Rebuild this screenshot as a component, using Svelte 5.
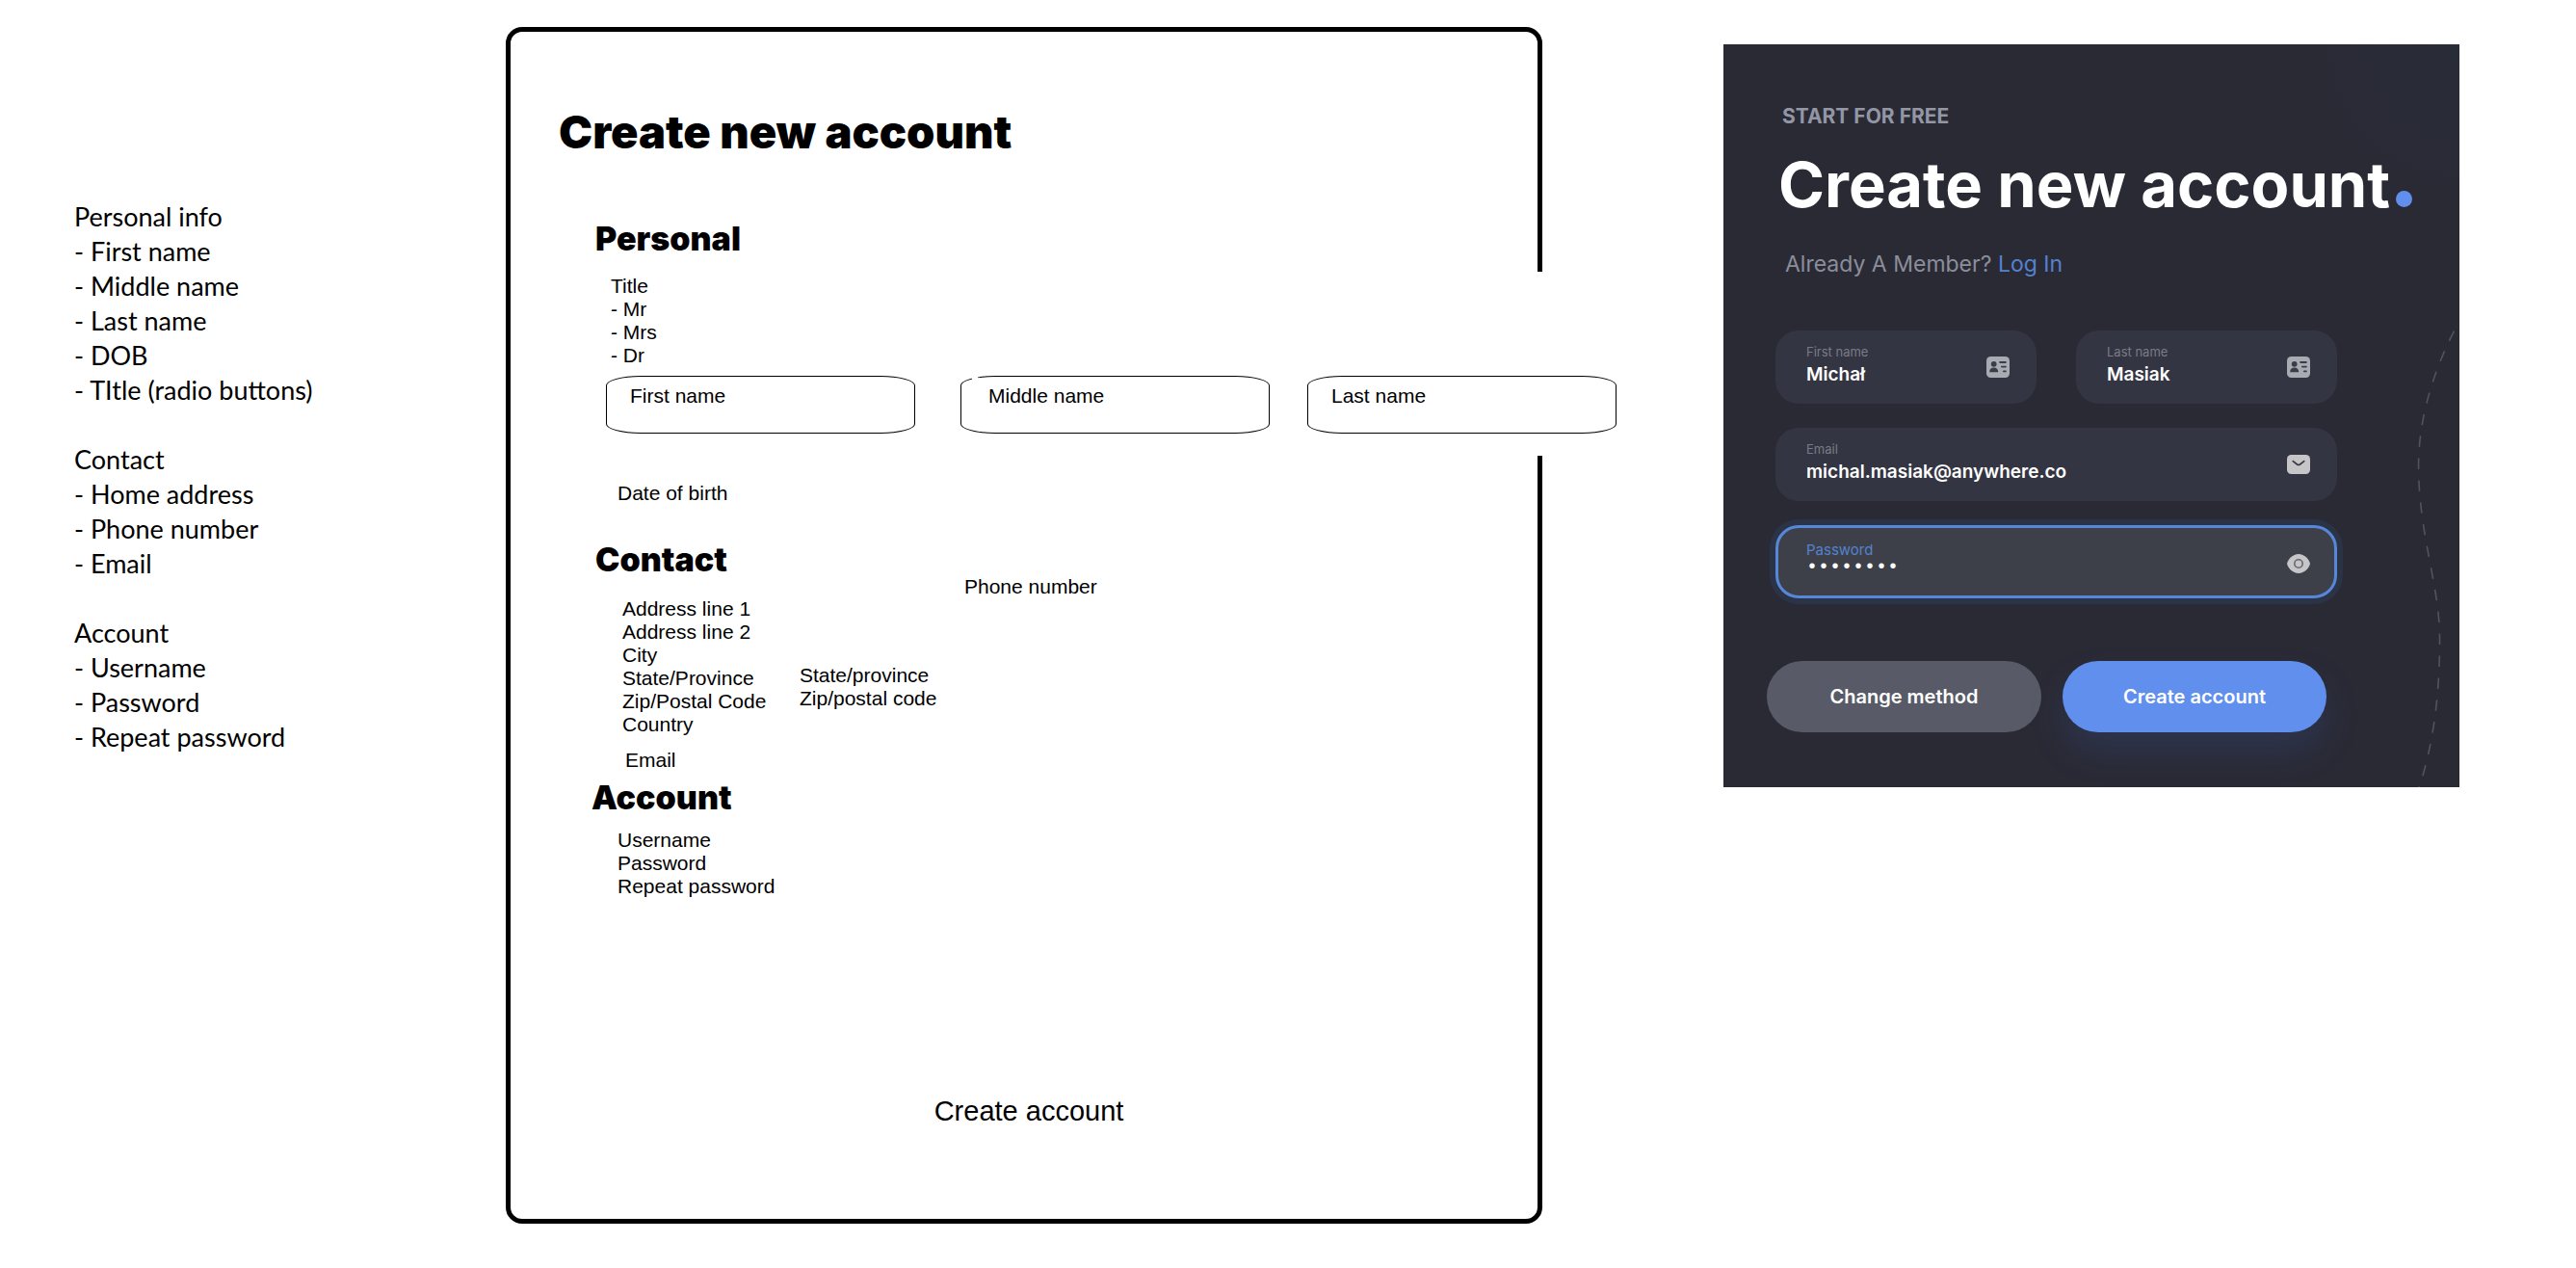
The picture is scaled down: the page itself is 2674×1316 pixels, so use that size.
<script>
  const notes = [
    { title: 'Personal info', items: ['First name', 'Middle name', 'Last name', 'DOB', 'TItle (radio buttons)'] },
    { title: 'Contact', items: ['Home address', 'Phone number', 'Email'] },
    { title: 'Account', items: ['Username', 'Password', 'Repeat password'] }
  ];
  const titles = ['Mr', 'Mrs', 'Dr'];
  const address = ['Address line 1', 'Address line 2', 'City', 'State/Province', 'Zip/Postal Code', 'Country'];
  const login = ['Username', 'Password', 'Repeat password'];
</script>

{#snippet cardIcon()}
  <svg class="icon dim" viewBox="0 0 24 22" aria-hidden="true">
    <rect width="24" height="22" rx="4.5" fill="currentColor" />
    <g class="cut">
      <circle cx="7.7" cy="7.8" r="2.9" />
      <path d="M3.2 16.2c0-3 1.8-4.6 4.5-4.6s4.5 1.6 4.5 4.6z" />
      <rect x="13.2" y="5" width="7.6" height="1.9" rx=".8" />
      <rect x="15" y="9.7" width="5.8" height="1.9" rx=".8" />
      <rect x="17" y="14.4" width="3.8" height="1.9" rx=".8" />
    </g>
  </svg>
{/snippet}

<main class="board">
  <aside class="notes">
    {#each notes as group}
      <section>
        <p>{group.title}</p>
        {#each group.items as item}
          <p>- {item}</p>
        {/each}
      </section>
    {/each}
  </aside>

  <form class="frame">
    <h1>Create new account</h1>

    <section class="personal">
      <h2>Personal</h2>
      <div class="titles">
        <p>Title</p>
        {#each titles as t}
          <p>- {t}</p>
        {/each}
      </div>
      <div class="names">
        <input class="name-box" type="text" placeholder="First name" aria-label="First name" />
        <input class="name-box middle" type="text" placeholder="Middle name" aria-label="Middle name" />
        <input class="name-box" type="text" placeholder="Last name" aria-label="Last name" />
      </div>
      <p class="dob">Date of birth</p>
    </section>

    <section class="contact">
      <div>
        <h2>Contact</h2>
        <div class="address">
          {#each address as line}
            <p>{line}</p>
          {/each}
        </div>
        <p class="email">Email</p>
      </div>
      <div class="region">
        <p>State/province</p>
        <p>Zip/postal code</p>
      </div>
      <p class="phone">Phone number</p>
    </section>

    <section class="account">
      <h2>Account</h2>
      <div class="login">
        {#each login as line}
          <p>{line}</p>
        {/each}
      </div>
    </section>

    <button class="plain" type="button">Create account</button>
  </form>

  <form class="card">
    <svg class="trail" viewBox="0 0 764 772" aria-hidden="true">
      <path d="M759 298C734 346 722 396 722 437C722 510 744 562 744 618C744 682 736 732 722 774" />
    </svg>
    <p class="kicker">START FOR FREE</p>
    <h2 class="headline">Create new account<span class="dot"></span></h2>
    <p class="member">Already A Member? <a href="#login">Log In</a></p>

    <div class="fields">
      <div class="field">
        <div class="entry">
          <label for="first">First name</label>
          <input id="first" type="text" value="Michał" />
        </div>
        {@render cardIcon()}
      </div>
      <div class="field">
        <div class="entry">
          <label for="last">Last name</label>
          <input id="last" type="text" value="Masiak" />
        </div>
        {@render cardIcon()}
      </div>
      <div class="field wide">
        <div class="entry">
          <label for="mail">Email</label>
          <input id="mail" type="email" value="michal.masiak@anywhere.co" />
        </div>
        <svg class="icon" viewBox="0 0 24 22" aria-hidden="true">
          <rect y="1" width="24" height="20" rx="4.5" fill="currentColor" />
          <path class="line" d="M6.2 7.7l4.3 3.3q1.5 1 3 0l4.3-3.3" />
        </svg>
      </div>
      <div class="field wide active">
        <div class="entry">
          <label for="pass">Password</label>
          <input id="pass" type="password" value="password" />
        </div>
        <svg class="icon" viewBox="0 0 24 22" aria-hidden="true">
          <path fill="currentColor" d="M0 11C1 6.5 6 1 12 1s11 5.5 12 10c-1 4.5-6 10-12 10S1 15.5 0 11z" />
          <circle class="line pupil" cx="12" cy="11" r="4.2" />
        </svg>
      </div>
    </div>

    <div class="actions">
      <button class="change" type="button">Change method</button>
      <button class="create" type="button">Create account</button>
    </div>
  </form>
</main>

<style>
  :global(body) {
    margin: 0;
    background: #fff;
  }
  * {
    box-sizing: border-box;
  }
  p,
  h1,
  h2 {
    margin: 0;
    white-space: nowrap;
  }
  button,
  input {
    font: inherit;
    color: inherit;
    border: 0;
    padding: 0;
    margin: 0;
    background: none;
    outline: none;
    min-width: 0;
  }
  button {
    cursor: pointer;
  }

  .board {
    display: grid;
    grid-template-columns: 525fr 1076fr 188fr 764fr 121fr;
    min-height: 100vh;
    padding: 28px 0 46px;
    color: #000;
    font: 21px/24px 'Liberation Sans', Arial, sans-serif;
  }

  .notes {
    display: flex;
    flex-direction: column;
    gap: 36px;
    padding: 179px 0 0 77px;
    font: 27px/36px Lato, sans-serif;
  }

  .frame {
    display: flex;
    flex-direction: column;
    padding: 78px 0 96px;
    border: 5px solid #000;
    border-radius: 17px;
  }
  .frame h1,
  .frame h2 {
    font-family: Inter, sans-serif;
    font-weight: 900;
  }
  .frame h1 {
    padding-left: 50px;
    font-size: 47px;
    line-height: 52px;
  }
  .frame h2 {
    font-size: 34px;
    line-height: 40px;
  }

  .personal {
    margin-top: 65px;
    padding-left: 88px;
  }
  .titles {
    padding: 17px 0 9px 16px;
  }
  .names {
    position: relative;
    display: grid;
    grid-template-columns: 321fr 47fr 321fr 39fr 321fr;
    margin: 0 -82px 0 11px;
  }
  /* break in the frame's outline beside the name boxes */
  .names::before {
    content: '';
    position: absolute;
    top: -108px;
    right: 72px;
    bottom: -23px;
    width: 16px;
    background: #fff;
  }
  /* nick in the middle box's corner */
  .names::after {
    content: '';
    position: absolute;
    top: 0;
    left: 380px;
    width: 6px;
    height: 6px;
    background: #fff;
  }
  .name-box {
    position: relative;
    height: 60px;
    padding: 0 24px 18px;
    border: 1px solid #000;
    border-radius: 36px / 10px;
  }
  .name-box:nth-child(2) {
    grid-column: 3;
  }
  .name-box:nth-child(3) {
    grid-column: 5;
  }
  .name-box.middle {
    padding-left: 28px;
  }
  .name-box::placeholder {
    color: #000;
    opacity: 1;
  }
  .dob {
    padding: 50px 0 0 23px;
  }

  .contact {
    display: grid;
    grid-template-columns: 212px 171px 1fr;
    margin-top: 37px;
    padding-left: 88px;
  }
  .address {
    padding: 19px 0 13px 28px;
  }
  .email {
    padding-left: 31px;
  }
  .region {
    padding-top: 128px;
  }
  .phone {
    padding-top: 36px;
  }

  .account {
    margin-top: 7px;
    padding-left: 84px;
  }
  .login {
    padding: 12px 0 0 27px;
  }

  .plain {
    align-self: center;
    margin-top: auto;
    padding-left: 10px;
    font-size: 29px;
    line-height: 32px;
  }

  .card {
    grid-column: 4;
    align-self: start;
    position: relative;
    margin-top: 18px;
    padding: 62px 0 57px;
    overflow: hidden;
    background: radial-gradient(circle at 100% 0, #282c37 0, #2a2a35 160px);
    color: #fff;
    font: 21px/26px Inter, sans-serif;
  }
  .trail {
    position: absolute;
    inset: 0;
    width: 100%;
    height: 100%;
    fill: none;
    stroke: #53535d;
    stroke-width: 1.6;
    stroke-dasharray: 11.5 11.5;
  }
  .kicker,
  .headline,
  .member {
    padding-left: 61px;
  }
  .kicker {
    color: #9296a5;
    font-weight: 700;
  }
  .headline {
    margin: 20px 0 31px -4px;
    font-size: 65px;
    line-height: 76px;
    font-weight: 700;
  }
  .dot {
    display: inline-block;
    width: 17px;
    height: 17px;
    margin-left: 6px;
    border-radius: 50%;
    background: #618fee;
  }
  .member {
    padding-left: 64px;
    color: #8b8e9b;
    font-size: 23px;
  }
  .member a {
    color: #5482cf;
    text-decoration: none;
  }

  .fields {
    display: grid;
    grid-template-columns: 1fr 1fr;
    gap: 25px 41px;
    margin: 56px 127px 0 54px;
  }
  .field {
    display: flex;
    align-items: center;
    padding: 14px 28px 18px 32px;
    border-radius: 24px;
    background: #343542;
  }
  .wide {
    grid-column: 1 / -1;
  }
  .entry {
    display: flex;
    flex: 1;
    flex-direction: column;
    gap: 4px;
    min-width: 0;
  }
  .entry label {
    color: #7a7b86;
    font-size: 13px;
    line-height: 16px;
  }
  .entry input {
    width: 100%;
    height: 24px;
    font-size: 19px;
    font-weight: 600;
  }
  .active {
    padding: 14px 25px 22px 29px;
    border: 3px solid #5787d8;
    background: #3e4049;
    box-shadow: 0 0 0 6px #2b3346;
  }
  .active .entry {
    gap: 0;
  }
  .active label {
    color: #5482cf;
    font-size: 15px;
    line-height: 18px;
  }
  .active input {
    height: 16px;
    font: 20px/16px 'Liberation Mono', monospace;
  }
  .icon {
    flex: none;
    width: 24px;
    height: 22px;
    margin-top: 4px;
    color: #c6c6c8;
  }
  .active .icon {
    margin-top: 12px;
  }
  .dim {
    color: #a9abb2;
  }
  .cut {
    fill: #3b3c48;
  }
  .line {
    fill: none;
    stroke: #34353f;
    stroke-width: 1.6;
    stroke-linecap: round;
  }
  .pupil {
    stroke: #66676c;
  }

  .actions {
    position: relative;
    display: grid;
    grid-template-columns: 285fr 274fr;
    gap: 22px;
    margin: 65px 138px 0 45px;
  }
  .actions button {
    height: 74px;
    border-radius: 37px;
    font-size: 20px;
    font-weight: 600;
  }
  .change {
    background: #585b67;
  }
  .create {
    background: #618fee;
    box-shadow: 0 20px 36px rgba(60, 100, 190, 0.18);
  }
</style>
